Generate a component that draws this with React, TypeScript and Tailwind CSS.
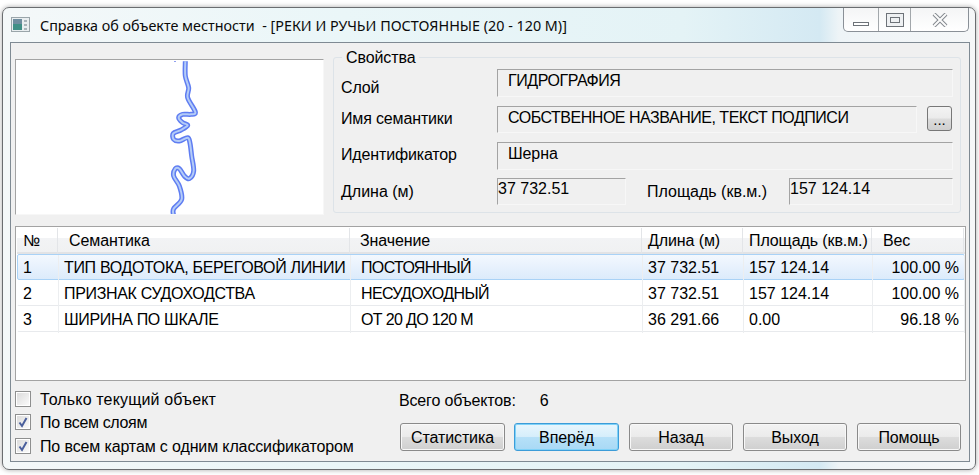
import React from "react";

const riverPts: [number, number][] = [
  [133, 16], [133, 60], [143, 95], [140, 125], [163, 168], [150, 175], [125, 175], [113, 185], [125, 200], [140, 208],
  [120, 222], [97, 232], [98, 250], [115, 255], [140, 245], [147, 262], [152, 300], [158, 345], [145, 368], [130, 360],
  [115, 338], [103, 338], [98, 360], [115, 390], [122, 430], [98, 458], [97, 475],
].map(([x, y]) => [125 + x / 3, y / 3 - 4] as [number, number]);

function smooth(p: [number, number][]) {
  let d = `M${p[0][0]} ${p[0][1]}`;
  for (let i = 0; i < p.length - 1; i++) {
    const a = p[Math.max(i - 1, 0)], b = p[i], c = p[i + 1], e = p[Math.min(i + 2, p.length - 1)];
    d += ` C${b[0] + (c[0] - a[0]) / 6} ${b[1] + (c[1] - a[1]) / 6} ${c[0] - (e[0] - b[0]) / 6} ${c[1] - (e[1] - b[1]) / 6} ${c[0]} ${c[1]}`;
  }
  return d;
}

function River() {
  const d = smooth(riverPts);
  return (
    <svg viewBox="0 0 307 154" className="block w-full h-full">
      <rect x="158" y="1" width="2" height="1" fill="#8f9ff0" />
      <path d={d} fill="none" stroke="#5f7df2" strokeWidth="5" strokeLinejoin="round" />
      <path d={d} fill="none" stroke="#b4ccf7" strokeWidth="2" strokeLinejoin="round" />
    </svg>
  );
}

function Field({ w, h, text, size }: { w: string; h: string; text: string; size: string }) {
  return (
    <div className={`${w} ${h} border border-[#a3a3a3] border-r-[#f7f7f7] border-b-[#f7f7f7] pl-[10px] pt-[1px] ${size} leading-[20px] whitespace-nowrap`}>
      {text}
    </div>
  );
}

function Check({ checked, label, size }: { checked?: boolean; label: string; size: string }) {
  return (
    <div className="flex items-center h-[16px]">
      <div className="w-[16px] h-[16px] border border-[#8e8f8f] bg-white p-[1px] shrink-0">
        <div className="w-full h-full bg-gradient-to-br from-[#dcdcdc] to-[#fafafa] flex items-center justify-center">
          {checked && (
            <svg viewBox="0 0 12 12" className="w-[12px] h-[12px]">
              <path d="M2.5 6.5 L5 10 L9.5 2" fill="none" stroke="#4a5f9c" strokeWidth="2" />
            </svg>
          )}
        </div>
      </div>
      <span className={`ml-[9px] pt-[2px] ${size} whitespace-nowrap`}>{label}</span>
    </div>
  );
}

function Btn({ w, text, primary }: { w: string; text: string; primary?: boolean }) {
  return (
    <div
      className={`${w} h-[28px] pt-[2px] rounded-[3px] border flex items-center justify-center text-[16px] tracking-[-0.1px] ${
        primary
          ? "border-[#3c9cd8] bg-[linear-gradient(#e8f6fd_0%,#d6eefb_48%,#b5e0f8_52%,#a9d9f5_100%)] shadow-[inset_0_0_0_1px_#7fd2f8]"
          : "border-[#8a8a8a] bg-[linear-gradient(#f3f3f3_0%,#ebebeb_48%,#dcdcdc_52%,#cfcfcf_100%)] shadow-[inset_0_0_0_1px_#f8f8f8]"
      }`}
    >
      {text}
    </div>
  );
}

const cols = "grid grid-cols-[41px_292px_292px_101px_129px_92px]";
const rows = [
  ["1", "ТИП ВОДОТОКА, БЕРЕГОВОЙ ЛИНИИ", "ПОСТОЯННЫЙ", "37 732.51", "157 124.14", "100.00 %"],
  ["2", "ПРИЗНАК СУДОХОДСТВА", "НЕСУДОХОДНЫЙ", "37 732.51", "157 124.14", "100.00 %"],
  ["3", "ШИРИНА ПО ШКАЛЕ", "ОТ 20 ДО 120 М", "36 291.66", "0.00", "96.18 %"],
];
const head = ["№", "Семантика", "Значение", "Длина (м)", "Площадь (кв.м.)", "Вес"];
const label = "text-[16px] tracking-[-0.15px] leading-[20px] whitespace-nowrap";

export default function App() {
  return (
    <div className="w-[979px] h-[475px] bg-white pt-[7px] pl-[2px] overflow-hidden text-black font-['Liberation_Sans',sans-serif]">
      <div className="w-[974px] h-[463px] rounded-[7px] border border-[#6a6d70] shadow-[0_0_5px_rgba(0,0,0,0.35)] bg-[linear-gradient(90deg,#f4f8f9_0%,#eaf6f8_35%,#e4f3f6_70%,#d4e9f3_84%,#eef4f7_86%,#f5f7f8_100%)] flex flex-col pl-[7px] pr-[5px] pb-[7px]">
        <div className="h-[34px] flex items-start shrink-0">
          <svg viewBox="0 0 19 15" className="w-[19px] h-[15px] mt-[9px] ml-[1px] shrink-0">
            <rect x="0.5" y="0.5" width="18" height="14" fill="#e9eef0" stroke="#9aa5aa" />
            <rect x="2" y="2" width="9" height="11" fill="#3f8f86" />
            <rect x="2" y="2" width="9" height="5" fill="#6f8d9f" />
            <rect x="13" y="3" width="3" height="2" fill="#a9b4ba" />
            <rect x="13" y="7" width="3" height="2" fill="#a9b4ba" />
            <rect x="13" y="11" width="3" height="2" fill="#a9b4ba" />
          </svg>
          <div className="ml-[10px] mt-[8px] text-[14.35px] leading-[20px] whitespace-pre text-[#0a0a0a] font-['Noto_Sans',sans-serif]">
            Справка об объекте местности  - [РЕКИ И РУЧЬИ ПОСТОЯННЫЕ (20 - 120 М)]
          </div>
          <div className="ml-auto mr-[1px] h-[24px] w-[126px] flex border border-t-0 border-[#8a9097] rounded-b-[5px] bg-[linear-gradient(#f4f5f6,#ffffff)] shrink-0">
            <div className="w-[35px] border-r border-[#a2a7ab] flex items-end justify-center pb-[5px]">
              <div className="w-[16px] h-[4px] border border-[#6d7278] bg-white" />
            </div>
            <div className="w-[32px] border-r border-[#a2a7ab] flex items-center justify-center">
              <div className="w-[18px] h-[14px] border border-[#6d7278] bg-[#eef0f2] flex items-center justify-center">
                <div className="w-[10px] h-[6px] border border-[#6d7278]" />
              </div>
            </div>
            <div className="flex-1 flex items-center justify-center">
              <svg viewBox="0 0 16 14" className="w-[16px] h-[14px]">
                <path d="M2 1 L14 13 M14 1 L2 13" stroke="#83888e" strokeWidth="4" />
                <path d="M2 1 L14 13 M14 1 L2 13" stroke="#fbfbfb" strokeWidth="2" />
              </svg>
            </div>
          </div>
        </div>

        <div className="flex-1 bg-[#f0f0f0] border border-[#7f8a93] pl-[4px] pr-[4px] pt-[14px]">
          <div className="flex h-[158px]">
            <div className="w-[309px] h-[156px] mt-[2px] bg-white border border-[#a3a3a3] border-r-[#f7f7f7] border-b-[#f7f7f7] shrink-0">
              <River />
            </div>
            <div className="relative ml-[9px] w-[628px] h-[156px] border border-[#dde3e8] rounded-[3px] pl-[7px]">
              <div className="absolute left-[8px] top-[-10px] px-[4px] bg-[#f0f0f0] text-[16px] tracking-[-0.1px] leading-[20px]">Свойства</div>
              <div className="flex flex-col">
                <div className="flex mt-[11px] h-[28px]">
                  <div className={`w-[156px] pt-[9px] ${label}`}>Слой</div>
                  <Field w="w-[456px]" h="h-[28px]" size="text-[16px] tracking-[-0.45px]" text="ГИДРОГРАФИЯ" />
                </div>
                <div className="flex mt-[9px] h-[27px]">
                  <div className={`w-[156px] pt-[3px] ${label}`}>Имя семантики</div>
                  <Field w="w-[420px]" h="h-[27px]" size="text-[16px] tracking-[-0.48px]" text="СОБСТВЕННОЕ НАЗВАНИЕ, ТЕКСТ ПОДПИСИ" />
                  <div className="ml-[10px] w-[25px] h-[25px] rounded-[3px] border border-[#777] bg-[linear-gradient(#f3f3f3_0%,#ebebeb_48%,#dcdcdc_52%,#cfcfcf_100%)] flex items-center justify-center text-[15px] leading-[20px] pt-[2px]">
                    ...
                  </div>
                </div>
                <div className="flex mt-[9px] h-[28px]">
                  <div className={`w-[156px] pt-[3px] ${label}`}>Идентификатор</div>
                  <Field w="w-[456px]" h="h-[28px]" size="text-[16px] tracking-[-0.1px]" text="Шерна" />
                </div>
                <div className="flex mt-[8px] h-[27px]">
                  <div className={`w-[156px] pt-[4px] text-[16px] leading-[20px]`}>Длина (м)</div>
                  <div className="w-[129px] h-[27px] border border-[#a3a3a3] border-r-[#f7f7f7] border-b-[#f7f7f7] text-[16px] leading-[20px]">37 732.51</div>
                  <div className="w-[163px] pl-[21px] pt-[4px] text-[16px] leading-[20px] whitespace-nowrap">Площадь (кв.м.)</div>
                  <div className="w-[164px] h-[27px] border border-[#a3a3a3] border-r-[#f7f7f7] border-b-[#f7f7f7] text-[16px] leading-[20px]">157 124.14</div>
                </div>
              </div>
            </div>
          </div>

          <div className="mt-[11px] w-[951px] h-[155px] bg-white border border-[#a3a3a3] pl-[1px] pt-[1px] text-[16px]">
            <div className={`${cols} h-[26px] border-b-2 border-[#e2e3e5] bg-[linear-gradient(#ffffff_0%,#ffffff_40%,#f2f3f5_42%,#f0f1f2_100%)]`}>
              {head.map((h, i) => (
                <div key={h} className={`border-r border-[#e3e5e8] h-[26px] leading-[26px] whitespace-nowrap tracking-[-0.1px] ${i === 1 ? "pl-[11px]" : i === 0 ? "pl-[6px]" : i === 2 ? "pl-[10px]" : i === 5 ? "pl-[11px]" : "pl-[6px]"}`}>{h}</div>
              ))}
            </div>
            {rows.map((r, ri) => (
              <div
                key={r[0]}
                className={`${cols} h-[26px] border rounded-[2px] ${ri === 0 ? "border-[#a9d2f6] bg-[linear-gradient(#f3f8fe,#dcebfb)]" : "border-transparent border-b-[#e8eaed]"}`}
              >
                {r.map((c, i) => (
                  <div
                    key={i}
                    className={`border-r border-[#eceef0] leading-[26px] whitespace-nowrap ${
                      i === 0 ? "pl-[5px]" : i === 5 ? "text-right pr-[5px]" : i === 2 ? "pl-[10px] tracking-[-0.65px]" : i === 1 ? "pl-[5px] tracking-[-0.33px]" : "pl-[5px]"
                    }`}
                  >
                    {c}
                  </div>
                ))}
              </div>
            ))}
          </div>

          <div className="flex mt-[9px]">
            <div className="w-[384px] flex flex-col pt-[1px] shrink-0">
              <Check size="text-[16px] tracking-[0.15px]" label="Только текущий объект" />
              <div className="mt-[7px]"><Check checked size="text-[16px] tracking-[-0.35px]" label="По всем слоям" /></div>
              <div className="mt-[8px]"><Check checked size="text-[16px] tracking-[-0.13px]" label="По всем картам с одним классификатором" /></div>
            </div>
            <div className="flex flex-col">
              <div className={`flex h-[23px] pt-[1px] ${label}`}>
                <span>Всего объектов:</span>
                <span className="ml-[24px]">6</span>
              </div>
              <div className="flex mt-[10px] ml-[1px]">
                <Btn w="w-[105px]" text="Статистика" />
                <div className="ml-[9px]"><Btn w="w-[105px]" text="Вперёд" primary /></div>
                <div className="ml-[10px]"><Btn w="w-[104px]" text="Назад" /></div>
                <div className="ml-[10px]"><Btn w="w-[104px]" text="Выход" /></div>
                <div className="ml-[10px]"><Btn w="w-[104px]" text="Помощь" /></div>
              </div>
            </div>
          </div>
        </div>
      </div>
    </div>
  );
}
